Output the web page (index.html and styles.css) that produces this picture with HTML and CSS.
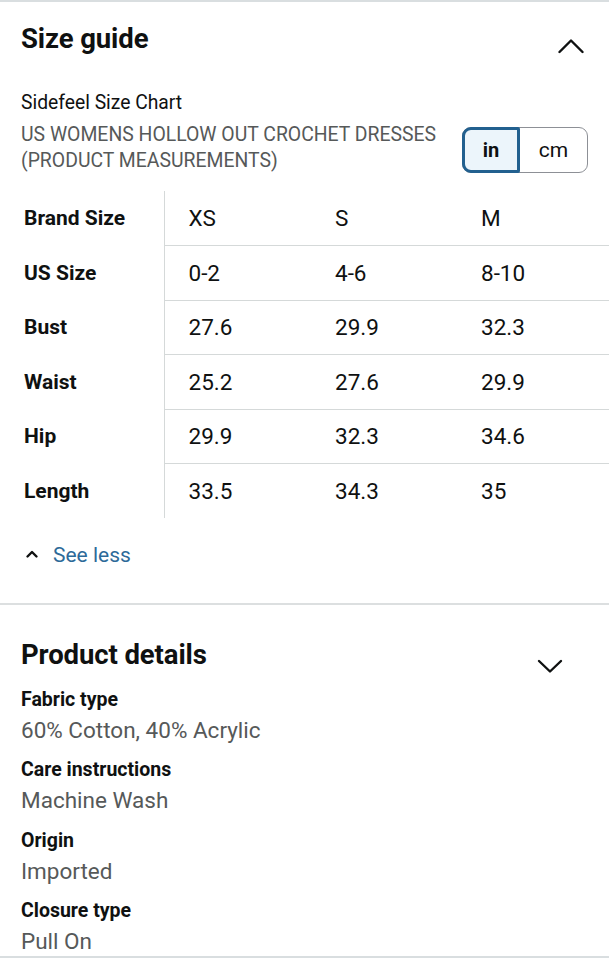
FILE: index.html
```html
<!DOCTYPE html>
<html lang="en">
<head>
<meta charset="utf-8">
<title>Size guide</title>
<link rel="stylesheet" href="styles.css">
</head>
<body>
<div class="page">
  <section class="size-guide">
    <header class="sec-head">
      <h2 class="sec-title">Size guide</h2>
      <svg class="chev chev-up" width="26" height="24" viewBox="0 0 26 24" aria-hidden="true"><path d="M1.5 18 L13 6.5 L24.5 18" fill="none" stroke="#0f1111" stroke-width="2.4" stroke-linecap="round" stroke-linejoin="round"/></svg>
    </header>
    <p class="chart-name">Sidefeel Size Chart</p>
    <div class="chart-sub">
      <p class="chart-desc">US WOMENS HOLLOW OUT CROCHET DRESSES<br>(PRODUCT MEASUREMENTS)</p>
      <div class="unit-toggle">
        <span class="seg seg-active">in</span>
        <span class="seg">cm</span>
      </div>
    </div>
    <div class="table-wrap">
      <table class="size-table">
        <colgroup><col class="c-lab"><col class="c-v1"><col class="c-v2"><col class="c-v3"></colgroup>
        <tbody>
          <tr><th>Brand Size</th><td>XS</td><td>S</td><td>M</td></tr>
          <tr><th>US Size</th><td>0-2</td><td>4-6</td><td>8-10</td></tr>
          <tr><th>Bust</th><td>27.6</td><td>29.9</td><td>32.3</td></tr>
          <tr><th>Waist</th><td>25.2</td><td>27.6</td><td>29.9</td></tr>
          <tr><th>Hip</th><td>29.9</td><td>32.3</td><td>34.6</td></tr>
          <tr><th>Length</th><td>33.5</td><td>34.3</td><td>35</td></tr>
        </tbody>
      </table>
    </div>
    <a class="see-less" href="#">
      <svg width="14" height="10" viewBox="0 0 14 10" aria-hidden="true"><path d="M2.5 7.5 L7 3 L11.5 7.5" fill="none" stroke="#0f1111" stroke-width="2.4" stroke-linecap="round" stroke-linejoin="round"/></svg>
      <span>See less</span>
    </a>
  </section>

  <section class="details">
    <header class="sec-head details-head">
      <h2 class="sec-title">Product details</h2>
      <svg class="chev chev-down" width="26" height="24" viewBox="0 0 26 24" aria-hidden="true"><path d="M2 7 L13 17.5 L24 7" fill="none" stroke="#0f1111" stroke-width="2.4" stroke-linecap="round" stroke-linejoin="round"/></svg>
    </header>
    <dl class="detail-list">
      <div class="detail"><dt>Fabric type</dt><dd>60% Cotton, 40% Acrylic</dd></div>
      <div class="detail"><dt>Care instructions</dt><dd>Machine Wash</dd></div>
      <div class="detail"><dt>Origin</dt><dd>Imported</dd></div>
      <div class="detail"><dt>Closure type</dt><dd>Pull On</dd></div>
    </dl>
  </section>
</div>
</body>
</html>
```
FILE: styles.css
```css
* { box-sizing: border-box; }
html, body { margin: 0; padding: 0; background: #ffffff; }
body {
  font-family: Roboto, "Liberation Sans", Arial, sans-serif;
  color: #0f1111;
  overflow: hidden;
}
.page {
  width: 609px;
  border-top: 2px solid #d9dee0;
  border-bottom: 2px solid #d9dee0;
}
.size-guide {
  padding: 0 0 35px 21px;
  border-bottom: 2px solid #dcdfe0;
}
.sec-head {
  display: flex;
  justify-content: space-between;
  align-items: flex-start;
  padding-top: 19px;
}
.sec-title {
  margin: 0;
  font-size: 27.5px;
  line-height: 36px;
  font-weight: 700;
  letter-spacing: -0.1px;
}
.chev { display: block; flex: none; }
.chev-up { margin: 13px 25.5px 0 0; }
.chart-name {
  margin: 32px 0 0;
  font-size: 19.3px;
  line-height: 26px;
}
.chart-sub {
  display: flex;
  justify-content: space-between;
  align-items: flex-start;
  margin-top: 6px;
  padding-right: 21px;
}
.chart-desc {
  margin: 0;
  font-size: 19.4px;
  line-height: 26px;
  color: #565959;
  white-space: nowrap;
}
.unit-toggle {
  display: flex;
  margin-top: 5px;
  height: 46px;
  width: 126px;
  flex: none;
  border: 1px solid #8d9096;
  border-radius: 9px;
}
.seg {
  display: flex;
  align-items: center;
  justify-content: center;
  font-size: 21px;
}
.seg-active {
  width: 58px;
  margin: -1px 0 -1px -1px;
  background: #ecf5fb;
  border: 3px solid #22608f;
  border-radius: 9px 2px 2px 9px;
  font-weight: 700;
  font-size: 20px;
}
.seg + .seg { flex: 1; }
.table-wrap { margin-top: 17px; }
.size-table {
  border-collapse: collapse;
  table-layout: fixed;
  width: 588px;
}
.c-lab { width: 143px; }
.c-v1 { width: 147px; }
.c-v2 { width: 146px; }
.c-v3 { width: 152px; }
.size-table tr { height: 54.5px; }
.size-table th {
  text-align: left;
  font-weight: 700;
  font-size: 21px;
  padding: 0 0 0 3px;
  border-right: 1.5px solid #d5d9d9;
  white-space: nowrap;
}
.size-table td {
  font-size: 22.5px;
  padding: 0 0 0 24px;
  white-space: nowrap;
}
.size-table tr + tr td { border-top: 1.5px solid #d5d9d9; }
.see-less {
  display: inline-flex;
  align-items: center;
  gap: 14px;
  margin: 24px 0 0 4px;
  text-decoration: none;
  color: #2d6a99;
  font-size: 21px;
  line-height: 26px;
}
.see-less svg { display: block; margin-top: -2px; }
.details { padding: 13px 0 0 21px; }
.details-head { padding-top: 19px; }
.chev-down { margin: 16.5px 46px 0 0; }
.detail-list { margin: 10px 0 0; }
.detail + .detail { margin-top: 13.5px; }
.detail dt {
  font-size: 19.5px;
  line-height: 24px;
  font-weight: 700;
}
.detail dd {
  margin: 3px 0 0;
  font-size: 22.5px;
  line-height: 30px;
  color: #565959;
}
```
